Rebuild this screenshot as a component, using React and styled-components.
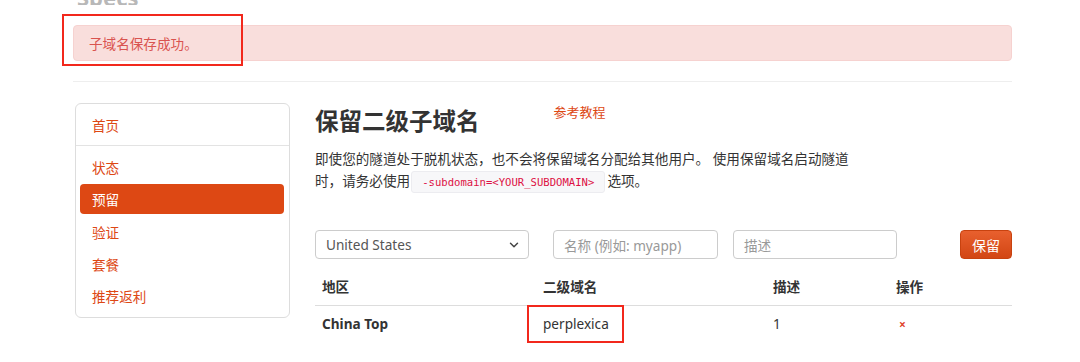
import React from "react";
import styled, { createGlobalStyle } from "styled-components";
import { ChevronDown } from "lucide-react";

const GlobalStyle = createGlobalStyle`
  html, body {
    margin: 0;
    padding: 0;
    background: #fff;
  }
  body {
    font-family: "Noto Sans", "Noto Sans CJK SC", sans-serif;
    color: #333;
    font-size: 13.6px;
  }
`;

const Page = styled.div`
  position: relative;
  width: 1080px;
  height: 362px;
  overflow: hidden;
`;

const Container = styled.div`
  width: 939px;
  margin-left: 73px;
`;

const TopClip = styled.div`
  height: 5px;
  overflow: hidden;
  display: flex;
  align-items: flex-end;
  padding-left: 4px;
  color: #b8b8b8;
  font-size: 22px;
  font-weight: 700;
  line-height: 16px;
`;

const Alert = styled.div`
  margin-top: 20px;
  height: 36px;
  box-sizing: border-box;
  padding: 0 15px;
  display: flex;
  align-items: center;
  background: #f9dedc;
  border: 1px solid #f6d2d0;
  border-radius: 4px;
  color: #d9534f;
  font-size: 13.6px;
`;

const Rule = styled.div`
  margin-top: 20px;
  height: 1px;
  background: #eeeeee;
`;

const Layout = styled.div`
  margin-top: 21px;
  display: grid;
  grid-template-columns: 215px 697px;
  column-gap: 25px;
  padding-left: 2px;
`;

const SideCard = styled.div`
  border: 1px solid #dddddd;
  border-radius: 6px;
  height: 215px;
  box-sizing: border-box;
`;

const SideHome = styled.div`
  height: 41px;
  display: flex;
  align-items: center;
  padding-left: 16px;
  color: #dd4814;
  border-bottom: 1px solid #e3e3e3;
`;

const SideList = styled.div`
  display: flex;
  flex-direction: column;
  gap: 2.3px;
  padding: 6px 5px 0 4px;
`;

const SideItem = styled.div`
  height: 30px;
  display: flex;
  align-items: center;
  padding-left: 12px;
  border-radius: 4px;
  color: ${(p) => (p.$active ? "#fff" : "#dd4814")};
  background: ${(p) => (p.$active ? "#dd4814" : "transparent")};
`;

const Main = styled.div`
  display: flex;
  flex-direction: column;
`;

const TitleRow = styled.div`
  display: flex;
  align-items: flex-start;
`;

const Title = styled.h2`
  margin: 0;
  font-size: 23.5px;
  line-height: 37px;
  font-weight: 700;
  color: #333;
`;

const TutorialLink = styled.a`
  margin-left: 74px;
  font-size: 13px;
  line-height: 18px;
  color: #dd4814;
  text-decoration: none;
`;

const Intro = styled.p`
  margin: 8px 0 0;
  width: 545px;
  line-height: 22px;
  font-size: 13.6px;
  color: #333;
`;

const Code = styled.code`
  display: inline-block;
  margin: 0 2px 0 1px;
  padding: 0 10px;
  height: 20px;
  line-height: 20px;
  background: #f7f7f9;
  border: 1px solid #ececf0;
  border-radius: 3px;
  color: #dd1144;
  font-family: "DejaVu Sans Mono", monospace;
  font-size: 10.6px;
  vertical-align: middle;
`;

const FormRow = styled.div`
  margin-top: 37px;
  display: flex;
  align-items: center;
  height: 29px;
`;

const Field = styled.div`
  width: ${(p) => p.$w}px;
  margin-left: ${(p) => p.$ml || 0}px;
  height: 29px;
  box-sizing: border-box;
  border: 1px solid #cccccc;
  border-radius: 4px;
  display: flex;
  align-items: center;
  justify-content: space-between;
  padding: 0 7px 0 10px;
  font-size: 13.6px;
  color: ${(p) => (p.$placeholder ? "#999" : "#555")};
  & > svg {
    width: 14px;
    height: 14px;
    color: #444;
  }
`;

const SaveButton = styled.button`
  margin-left: auto;
  width: 52px;
  height: 29px;
  border: 1px solid #c8420f;
  border-radius: 4px;
  background: linear-gradient(#e8602e, #d24614);
  color: #fff;
  font-family: inherit;
  font-size: 14px;
  padding: 0;
`;

const Table = styled.div`
  margin-top: 10px;
`;

const TRow = styled.div`
  display: grid;
  grid-template-columns: 221px 230px 123px 123px;
  border-bottom: ${(p) => (p.$head ? "1px solid #dddddd" : "none")};
`;

const Cell = styled.div`
  padding: 8px 7px;
  line-height: 20px;
  font-weight: ${(p) => (p.$bold ? 700 : 400)};
  color: #333;
  font-size: 13.6px;
`;

const RemoveMark = styled.span`
  color: #e0442f;
  font-size: 12px;
  font-weight: 700;
  padding-left: 3px;
`;

const Mark = styled.div`
  position: absolute;
  left: ${(p) => p.$x}px;
  top: ${(p) => p.$y}px;
  width: ${(p) => p.$w}px;
  height: ${(p) => p.$h}px;
  box-sizing: border-box;
  border: 2px solid #f2281c;
  pointer-events: none;
`;

const menu = ["状态", "预留", "验证", "套餐", "推荐返利"];

export default function App() {
  return (
    <Page>
      <GlobalStyle />
      <Container>
        <TopClip>Specs</TopClip>
        <Alert>子域名保存成功。</Alert>
        <Rule />
        <Layout>
          <SideCard>
            <SideHome>首页</SideHome>
            <SideList>
              {menu.map((m) => (
                <SideItem key={m} $active={m === "预留"}>
                  {m}
                </SideItem>
              ))}
            </SideList>
          </SideCard>
          <Main>
            <TitleRow>
              <Title>保留二级子域名</Title>
              <TutorialLink href="#">参考教程</TutorialLink>
            </TitleRow>
            <Intro>
              即使您的隧道处于脱机状态，也不会将保留域名分配给其他用户。 使用保留域名启动隧道时，请务必使用
              <Code>-subdomain=&lt;YOUR_SUBDOMAIN&gt;</Code>选项。
            </Intro>
            <FormRow>
              <Field $w={214}>
                United States
                <ChevronDown strokeWidth={2.5} />
              </Field>
              <Field $w={165} $ml={24} $placeholder>
                名称 (例如: myapp)
              </Field>
              <Field $w={164} $ml={15} $placeholder>
                描述
              </Field>
              <SaveButton>保留</SaveButton>
            </FormRow>
            <Table>
              <TRow $head>
                <Cell $bold>地区</Cell>
                <Cell $bold>二级域名</Cell>
                <Cell $bold>描述</Cell>
                <Cell $bold>操作</Cell>
              </TRow>
              <TRow>
                <Cell $bold>China Top</Cell>
                <Cell>perplexica</Cell>
                <Cell>1</Cell>
                <Cell>
                  <RemoveMark>×</RemoveMark>
                </Cell>
              </TRow>
            </Table>
          </Main>
        </Layout>
      </Container>
      <Mark $x={62} $y={14} $w={181} $h={52} />
      <Mark $x={527} $y={305} $w={97} $h={38} />
    </Page>
  );
}
